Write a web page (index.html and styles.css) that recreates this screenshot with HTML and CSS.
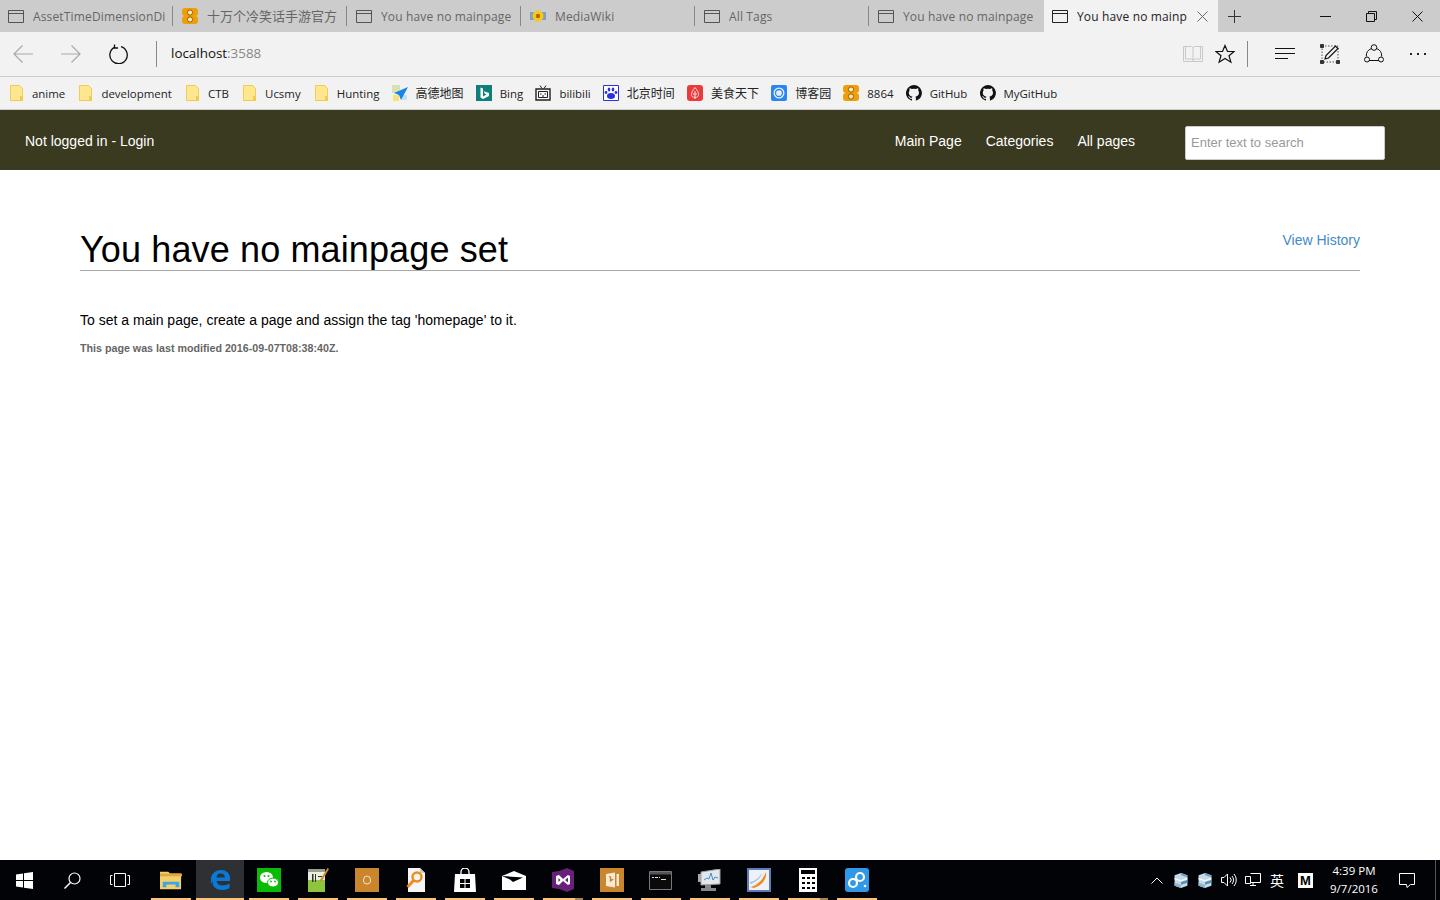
FILE: index.html
```html
<!DOCTYPE html>
<html lang="en">
<head>
    <meta charset="UTF-8">
    <title>You have no mainpage set</title>
    <link rel="stylesheet" href="styles.css">
</head>
<body>
<svg class="defs" width="0" height="0">
    <symbol id="pageIcon" viewBox="0 0 16 13">
        <path d="M.5.5h15v12H.5zM.5 3.5h15" fill="none" stroke="currentColor"/>
    </symbol>
    <symbol id="folder" viewBox="0 0 14 16">
        <path d="M.5.5h9l3 3v12H.5z" fill="#ffe78f" stroke="#f2cb52"/>
        <path d="M10 11h3v5h-3z" fill="#f2cb52"/>
    </symbol>
    <symbol id="eight" viewBox="0 0 16 16">
        <path d="M3 0h10q3 0 3 3v2q0 3-3 3q3 0 3 3v2q0 3-3 3H3q-3 0-3-3v-2q0-3 3-3q-3 0-3-3V3q0-3 3-3z" fill="#f09d09"/>
        <circle cx="8" cy="4.5" r="2.6" fill="#ffe9a8" stroke="#7a4b00" stroke-width=".8"/>
        <circle cx="8" cy="11.5" r="2.6" fill="#ffe9a8" stroke="#7a4b00" stroke-width=".8"/>
    </symbol>
    <symbol id="github" viewBox="0 0 16 16">
        <path d="M8 0a8 8 0 0 0-2.5 15.6c.4.1.5-.2.5-.4v-1.4c-2.2.5-2.7-1-2.7-1-.4-.9-.9-1.200-.9-1.200-.7-.5.1-.5.1-.5.8.1 1.200.8 1.200.8.7 1.200 1.900.9 2.300.7.1-.5.300-.9.500-1.100-1.800-.2-3.700-.9-3.700-4 0-.9.300-1.600.800-2.100-.1-.2-.4-1 .1-2.100 0 0 .7-.2 2.200.8a7.600 7.600 0 0 1 4 0c1.500-1 2.200-.8 2.200-.8.400 1.100.200 1.900.1 2.100.5.500.800 1.200.800 2.100 0 3.100-1.900 3.800-3.700 4 .3.300.6.700.6 1.500v2.200c0 .2.100.5.500.4A8 8 0 0 0 8 0z" fill="#111"/>
    </symbol>
    <symbol id="trayCube" viewBox="0 0 14 14">
        <path d="M1 2l6-2 6 2v10l-6 2-6-2z" fill="#c3dbe9"/>
        <path d="M1 4.500l6 2 6-2V6l-6 2-6-2z" fill="#f1f7fa"/>
        <path d="M7 0l6 2v2L7 2z" fill="#6f9fbd"/>
        <path d="M7 8.500l6-2V9l-6 2z" fill="#5a8fb2"/>
        <path d="M1 9l6 2v3l-6-2z" fill="#8fb6cf"/>
    </symbol>
</svg>

<div class="tabstrip">
    <div class="tab">
        <svg class="tabIcon"><use href="#pageIcon"/></svg>
        <span class="tabTitle">AssetTimeDimensionDi</span>
    </div>
    <div class="tab">
        <svg class="tabIcon tabIconFav"><use href="#eight"/></svg>
        <span class="tabTitle tabCjk">十万个冷笑话手游官方</span>
    </div>
    <div class="tab">
        <svg class="tabIcon"><use href="#pageIcon"/></svg>
        <span class="tabTitle">You have no mainpage</span>
    </div>
    <div class="tab">
        <svg class="tabIcon tabIconFav" viewBox="0 0 16 16">
            <path d="M.5 4h1v8h-1zM2.500 4h1v8h-1zM12.500 4h1v8h-1zM14.500 4h1v8h-1z" fill="#3f6fb5"/>
            <circle cx="8" cy="8" r="5.500" fill="#f4c91c"/>
            <circle cx="8" cy="8" r="2.200" fill="#b8640c"/>
        </svg>
        <span class="tabTitle">MediaWiki</span>
    </div>
    <div class="tab">
        <svg class="tabIcon"><use href="#pageIcon"/></svg>
        <span class="tabTitle">All Tags</span>
    </div>
    <div class="tab tabLast">
        <svg class="tabIcon"><use href="#pageIcon"/></svg>
        <span class="tabTitle">You have no mainpage</span>
    </div>
    <div class="tab tabActive">
        <svg class="tabIcon"><use href="#pageIcon"/></svg>
        <span class="tabTitle">You have no mainp</span>
        <svg class="tabClose" viewBox="0 0 11 11"><path d="M.5.500l10 10M10.500.500l-10 10" stroke="#666" fill="none"/></svg>
    </div>
    <svg class="newTab" viewBox="0 0 13 13"><path d="M6.500 0v13M0 6.500h13" stroke="#333" fill="none"/></svg>
    <div class="winControls">
        <div class="winBtn"><svg width="11" height="11" viewBox="0 0 11 11"><path d="M0 5.500h11" stroke="#111" fill="none"/></svg></div>
        <div class="winBtn"><svg width="11" height="11" viewBox="0 0 11 11"><path d="M.5 2.500h8v8h-8zM2.500 2.500v-2h8v8h-2" stroke="#111" fill="none"/></svg></div>
        <div class="winBtn"><svg width="11" height="11" viewBox="0 0 11 11"><path d="M.5.500l10 10M10.500.500l-10 10" stroke="#111" fill="none"/></svg></div>
    </div>
</div>

<div class="toolbar">
    <svg class="navArrow" viewBox="0 0 20 18"><path d="M20 9H1M9.500.500L1 9l8.500 8.500" fill="none" stroke="#aaa" stroke-width="1.200"/></svg>
    <svg class="navArrow navForward" viewBox="0 0 20 18"><path d="M0 9h19M10.500.500L19 9l-8.500 8.500" fill="none" stroke="#aaa" stroke-width="1.200"/></svg>
    <svg class="refresh" viewBox="0 0 20 20"><path d="M6 3.100a8.700 8.700 0 1 0 6-.4" fill="none" stroke="#111" stroke-width="1.300"/><path d="M5.500 .5v3.500h3.500" fill="none" stroke="#111" stroke-width="1.300"/></svg>
    <div class="vsep"></div>
    <div class="address">localhost<span class="port">:3588</span></div>
    <div class="toolIcons">
        <svg class="tool" viewBox="0 0 20 20"><path d="M.5 2.500h8l1.500 1 1.500-1h8v15h-19zM10 3.500v14M2.500 2.500v12.500h6l1.500 1 1.500-1h6V2.500" fill="none" stroke="#c8c8c8"/></svg>
        <svg class="tool toolStar" viewBox="0 0 20 20"><path d="M10 1.500l2.500 6h6.500l-5 4.200 1.900 6.500L10 14.500l-5.900 3.700L6 11.700 1 7.500h6.500z" fill="none" stroke="#111" stroke-width="1.200"/></svg>
        <div class="vsep vsepRight"></div>
        <svg class="tool toolHub" viewBox="0 0 20 20"><path d="M0 4.500h20M0 9.500h20M0 14.500h13" fill="none" stroke="#111"/></svg>
        <svg class="tool toolNote" viewBox="0 0 20 20"><path d="M2 2h16v16H2z" fill="none" stroke="#555" stroke-dasharray="1.500 1.500"/><path d="M.5.500h3v3h-3zM.5 16.500h3v3h-3zM16.500 16.500h3v3h-3z" fill="#333" stroke="#333"/><path d="M5 15l1-3.500L15.500 2l2.500 2.500L8.500 14z" fill="#f2f2f2" stroke="#111" stroke-width="1.200"/></svg>
        <svg class="tool toolShare" viewBox="0 0 20 20"><path d="M7.500 4.500A8 8 0 0 0 2.300 12.500M12.500 4.500a8 8 0 0 1 5.200 8M5 16.500h10" fill="none" stroke="#111"/><circle cx="10" cy="3.500" r="2.800" fill="none" stroke="#111"/><circle cx="3" cy="15.500" r="2.500" fill="none" stroke="#111"/><circle cx="17" cy="15.500" r="2.500" fill="none" stroke="#111"/></svg>
        <svg class="tool toolMore" viewBox="0 0 20 20"><path d="M2 9h2v2H2zM9 9h2v2H9zM16 9h2v2h-2z" fill="#222"/></svg>
    </div>
</div>

<div class="favbar">
    <div class="fav"><svg class="favFolder"><use href="#folder"/></svg>anime</div>
    <div class="fav"><svg class="favFolder"><use href="#folder"/></svg>development</div>
    <div class="fav"><svg class="favFolder"><use href="#folder"/></svg>CTB</div>
    <div class="fav"><svg class="favFolder"><use href="#folder"/></svg>Ucsmy</div>
    <div class="fav"><svg class="favFolder"><use href="#folder"/></svg>Hunting</div>
    <div class="fav favCjk">
        <svg class="favIcon" viewBox="0 0 16 16"><path d="M0 0h8v8H0z" fill="#d5e3b0"/><path d="M1 10h6v6H1z" fill="#f6e27a"/><path d="M10 10h5v5h-5z" fill="#c4dff5"/><path d="M16 2L2 8l5 2 2 5z" fill="#1586e8"/></svg>高德地图
    </div>
    <div class="fav">
        <svg class="favIcon" viewBox="0 0 16 16"><path d="M0 0h16v16H0z" fill="#0e8079"/><path d="M4.500 2.500l2.500 1v8l3.500-2-1.800-1-.9-2.300 5.200 1.800v3L7 14l-2.500-1.500z" fill="#fff"/></svg>Bing
    </div>
    <div class="fav">
        <svg class="favIcon" viewBox="0 0 16 16"><path d="M5 .5l2 3M11 .5l-2 3" stroke="#222" fill="none"/><path d="M1 4h14v11H1z" fill="#f7f7f7" stroke="#222" stroke-width="1.400"/><path d="M3.500 6.500h9v6h-9z" fill="none" stroke="#222"/><path d="M5 9h1.500M9.500 9H11M7 11h2" stroke="#222" fill="none"/></svg>bilibili
    </div>
    <div class="fav favCjk">
        <svg class="favIcon" viewBox="0 0 16 16"><path d="M.5.500h15v15H.5z" fill="#fff" stroke="#2932e1"/><ellipse cx="8" cy="11" rx="4" ry="3" fill="#2932e1"/><ellipse cx="6" cy="4.500" rx="1.300" ry="2" fill="#2932e1"/><ellipse cx="10" cy="4.500" rx="1.300" ry="2" fill="#2932e1"/><circle cx="3" cy="7.500" r="1.400" fill="#2932e1"/><circle cx="13" cy="7.500" r="1.400" fill="#2932e1"/></svg>北京时间
    </div>
    <div class="fav favCjk">
        <svg class="favIcon" viewBox="0 0 16 16"><path d="M3 0h10q3 0 3 3v10q0 3-3 3H3q-3 0-3-3V3q0-3 3-3z" fill="#ea3a3a"/><path d="M8 2.500c2.500 3 3.500 5 3.500 7 0 2-1.500 3-3.500 3s-3.500-1-3.500-3c0-2 1-4 3.500-7zM8 6v8M6 9h4" fill="none" stroke="#fbdcdc"/></svg>美食天下
    </div>
    <div class="fav favCjk">
        <svg class="favIcon" viewBox="0 0 16 16"><path d="M2 0h12q2 0 2 2v12q0 2-2 2H2q-2 0-2-2V2q0-2 2-2z" fill="#2a84f2"/><circle cx="8" cy="8" r="5.500" fill="#e6f1fe"/><circle cx="8" cy="8" r="3.500" fill="none" stroke="#2a84f2" stroke-width="1.300"/></svg>博客园
    </div>
    <div class="fav"><svg class="favIcon"><use href="#eight"/></svg>8864</div>
    <div class="fav"><svg class="favIcon"><use href="#github"/></svg>GitHub</div>
    <div class="fav"><svg class="favIcon"><use href="#github"/></svg>MyGitHub</div>
</div>

<nav class="topnav">
    <a class="navLink" href="#">Not logged in - Login</a>
    <div class="navRight">
        <a class="navLink" href="#">Main Page</a>
        <a class="navLink" href="#">Categories</a>
        <a class="navLink" href="#">All pages</a>
        <input class="search" type="text" placeholder="Enter text to search">
    </div>
</nav>

<main class="content">
    <div class="pageHead">
        <h1>You have no mainpage set</h1>
        <a class="history" href="#">View History</a>
    </div>
    <p class="bodyText">To set a main page, create a page and assign the tag 'homepage' to it.</p>
    <p class="modified">This page was last modified 2016-09-07T08:38:40Z.</p>
</main>

<div class="taskbar">
    <div class="taskSys">
        <svg width="17" height="17" viewBox="0 0 17 17"><path d="M0 2.500l7-1v6.500H0zM8 1.300L17 0v8H8zM0 9h7v6.500l-7-1zM8 9h9v8l-9-1.300z" fill="#fff"/></svg>
    </div>
    <div class="taskSys">
        <svg width="17" height="17" viewBox="0 0 17 17"><circle cx="10.500" cy="6.500" r="5.500" fill="none" stroke="#fff" stroke-width="1.200"/><path d="M6.500 10.500L.5 16.500" stroke="#fff" stroke-width="1.400"/></svg>
    </div>
    <div class="taskSys">
        <svg width="20" height="14" viewBox="0 0 20 14"><path d="M4.500.500h11v13h-11zM2.500 2.500h-2v9h2M17.500 2.500h2v9h-2" fill="none" stroke="#fff"/></svg>
    </div>
    <div class="taskApps">
        <div class="app appOpen">
            <svg width="22" height="20" viewBox="0 0 24 20"><path d="M0 1h9l2 2h12v17H0z" fill="#f5cf6c"/><path d="M0 3h24v3H0z" fill="#e0a93c"/><path d="M3 18v-6h18v6h-4v-3H7v3z" fill="#3ea6e8"/></svg>
        </div>
        <div class="app appOpen appActive">
            <svg width="20" height="20" viewBox="0 0 20 20"><path d="M1 8C2 3 6 0 11 0c5 0 9 3 9 8v3H6.500c.5 3 3 4.500 6 4.500 2.500 0 5-.7 7-2V18c-2 1.500-5 2-7.500 2C6 20 1.800 16.500 2.800 11c-.7 1-1.300 2-1.800 3.500-.2-2 0-4.500 0-6.500zm5.500-.5h8.500C15 5 13 3.500 10.500 3.500S7 5 6.500 7.500z" fill="#0a78d7"/></svg>
        </div>
        <div class="app appOpen">
            <svg width="24" height="24" viewBox="0 0 24 24"><path d="M0 0h24v24H0z" fill="#09bb07"/><ellipse cx="9.500" cy="9.500" rx="6.500" ry="5.500" fill="#fff"/><ellipse cx="16" cy="14.500" rx="5.500" ry="4.500" fill="#fff" stroke="#09bb07"/><circle cx="7.500" cy="8" r="1" fill="#09bb07"/><circle cx="11.500" cy="8" r="1" fill="#09bb07"/><circle cx="14" cy="13.500" r=".9" fill="#09bb07"/><circle cx="18" cy="13.500" r=".9" fill="#09bb07"/></svg>
        </div>
        <div class="app appOpen">
            <svg width="22" height="24" viewBox="0 0 22 24"><path d="M1 2h17v22H1z" fill="#e9efdf"/><path d="M1 12h17v12H1z" fill="#8fc43f"/><path d="M1 1h17v3H1z" fill="#9aa08e"/><path d="M5 6h1.500v8H5zM8 6h1v8H8zM11 8h4v1h-4z" fill="#333"/><path d="M20.500 0L22 1l-7 12-2 1 .2-2.500z" fill="#c9932c"/></svg>
        </div>
        <div class="app appOpen">
            <svg width="24" height="24" viewBox="0 0 24 24"><path d="M0 0h24v24H0z" fill="#c9862d"/><path d="M8.500 12a3.500 4 0 0 1 7 0v1a3.500 3 0 0 1-7 0z" fill="none" stroke="#f5e3c6"/></svg>
        </div>
        <div class="app appOpen">
            <svg width="20" height="24" viewBox="0 0 20 24"><path d="M2 0h12l5 5v19H2z" fill="#f6f6f6"/><path d="M14 0v5h5z" fill="#c9c9c9"/><circle cx="11" cy="9" r="4.500" fill="none" stroke="#f08a1d" stroke-width="2.400"/><path d="M7.500 12.500L1.500 19" stroke="#f08a1d" stroke-width="3"/></svg>
        </div>
        <div class="app appOpen">
            <svg width="22" height="24" viewBox="0 0 22 24"><path d="M7 6V4a4 4 0 0 1 8 0v2" fill="none" stroke="#fff" stroke-width="1.300"/><path d="M1 6h20l1 18H0z" fill="#fff"/><path d="M6 11h4.500v4H6zM11.500 11H16v4h-4.500zM6 16h4.500v4H6zM11.500 16H16v4h-4.500z" fill="#000"/></svg>
        </div>
        <div class="app appOpen">
            <svg width="24" height="19" viewBox="0 0 24 19"><path d="M0 5L12 0l12 5v14H0z" fill="#fff"/><path d="M0 5l21 1.500L11 11 8 8.500z" fill="#000"/></svg>
        </div>
        <div class="app appOpen appSplit">
            <svg width="22" height="24" viewBox="0 0 22 24"><path d="M0 4l7-1 8-3 7 3v18l-7 3-8-3-7-1z" fill="#68217a"/><path d="M4 8l3-1 4 4 5-4 2 1v8l-2 1-5-4-4 4-3-1zM6.500 10v4l2-2zM16 9.500L13 12l3 2.500z" fill="#fff" fill-rule="evenodd"/></svg>
        </div>
        <div class="app appOpen">
            <svg width="24" height="24" viewBox="0 0 24 24"><path d="M0 0h24v24H0z" fill="#c9862d"/><path d="M6 6l9-1.500v15L6 18z" fill="#f7ead4"/><path d="M16.500 6H19v12h-2.500z" fill="#f7ead4"/><path d="M9 8.500l1.500.5v4l2-1.500-1-.5" fill="none" stroke="#c9862d" stroke-width="1.300"/></svg>
        </div>
        <div class="app appOpen">
            <svg width="23" height="19" viewBox="0 0 23 19"><path d="M.5.500h22v18H.5z" fill="#0a0a0a" stroke="#777"/><path d="M1 1h21v2.500H1z" fill="#555"/><path d="M3 6h2v1H3zM6 6h3v1H6zM10 6h1v1h-1zM12 8h5v1h-5z" fill="#ddd"/></svg>
        </div>
        <div class="app appOpen">
            <svg width="24" height="22" viewBox="0 0 24 22"><path d="M7 12v7H3v3h15v-3h-5v-5z" fill="#888"/><path d="M3 3l19-3v15L3 16z" fill="#e4e7ea" stroke="#9aa0a6"/><path d="M6 11l3-2 2 1 2-6 2 7 2-3 3 1" fill="none" stroke="#3c8fd0"/><path d="M0 5h3v8H0z" fill="#aaa"/></svg>
        </div>
        <div class="app appOpen">
            <svg width="24" height="24" viewBox="0 0 24 24"><path d="M0 0h24v24H0z" fill="#5c7cba"/><path d="M2 2h20v20H2z" fill="#eef2f8"/><path d="M3 19C8 18 15 14 19 4c1 8-5 14-12 16z" fill="#f08a1d"/><path d="M3 14c5-1 9-4 12-9-1 5-6 9-12 11z" fill="#a6bfe0"/></svg>
        </div>
        <div class="app appOpen appSplit">
            <svg width="18" height="24" viewBox="0 0 18 24"><path d="M0 0h18v24H0z" fill="#fff"/><path d="M2 2h14v4H2zM3 9h3v2H3zM8 9h3v2H8zM13 9h3v2h-3zM3 14h3v2H3zM8 14h3v2H8zM13 14h3v2h-3zM3 19h3v2H3zM8 19h3v2H8zM13 19h3v2h-3z" fill="#000"/></svg>
        </div>
        <div class="app appOpen">
            <svg width="24" height="24" viewBox="0 0 24 24"><path d="M3 0h18q3 0 3 3v18q0 3-3 3H3q-3 0-3-3V3q0-3 3-3z" fill="#2f98e8"/><circle cx="8" cy="15" r="4" fill="none" stroke="#fff" stroke-width="2.200"/><circle cx="15" cy="9" r="4" fill="none" stroke="#fff" stroke-width="2.200"/><circle cx="20" cy="18" r="1.300" fill="#fff"/></svg>
        </div>
    </div>
    <div class="tray">
        <svg class="trayItem trayCaret" width="12" height="7" viewBox="0 0 12 7"><path d="M.5 6.500L6 1l5.500 5.500" fill="none" stroke="#fff"/></svg>
        <svg class="trayItem" width="16" height="15"><use href="#trayCube"/></svg>
        <svg class="trayItem" width="16" height="15"><use href="#trayCube"/></svg>
        <svg class="trayItem" width="16" height="14" viewBox="0 0 16 14"><path d="M.5 4.500h2.500L6.500 1v12L3 9.500H.5zM9 4.500a3.500 3.500 0 0 1 0 5M11 3a6 6 0 0 1 0 8M13 1a9 9 0 0 1 0 12" fill="none" stroke="#fff"/></svg>
        <svg class="trayItem" width="16" height="14" viewBox="0 0 16 14"><path d="M5.500.500h10v9h-10M.5 3.500h5v7h-5zM8 9.500v3M5 12.500h6" fill="none" stroke="#fff"/></svg>
        <span class="trayItem trayLang">英</span>
        <span class="trayItem trayIme">M</span>
        <div class="clock"><span>4:39 PM</span><span>9/7/2016</span></div>
        <svg class="notify" width="16" height="15" viewBox="0 0 16 15"><path d="M.5.500h15v11h-4l-3.500 3-.5-3h-7z" fill="none" stroke="#fff"/></svg>
        <div class="showDesktop"></div>
    </div>
</div>
</body>
</html>
```

FILE: styles.css
```css
html, body {
    margin: 0;
    height: 100%;
    overflow: hidden;
}

body {
    display: flex;
    flex-direction: column;
    height: 900px;
    background-color: #fff;
    font-family: "Liberation Sans", Arial, sans-serif;
    font-size: 14px;
    color: #000;
}

.defs {
    position: absolute;
}

/* barra de pestanas */
.tabstrip {
    display: flex;
    align-items: center;
    height: 32px;
    background-color: #ccc;
    font-family: "Open Sans", "Noto Sans CJK SC", sans-serif;
    font-size: 12px;
    letter-spacing: .15px;
}

.tab {
    box-sizing: border-box;
    display: flex;
    align-items: center;
    flex: none;
    width: 174px;
    height: 32px;
    padding-left: 8px;
    color: #666;
    position: relative;
    white-space: nowrap;
}

.tab::after {
    content: "";
    position: absolute;
    right: 1px;
    top: 6px;
    height: 20px;
    width: 1px;
    background-color: #888;
}

.tabLast::after,
.tabActive::after {
    display: none;
}

.tabActive {
    background-color: #f2f2f2;
    color: #222;
}

.tabIcon {
    width: 16px;
    height: 13px;
    margin-right: 9px;
    flex: none;
    color: #555;
}

.tabActive .tabIcon {
    color: #222;
}

.tabIconFav {
    height: 16px;
}

.tabTitle {
    overflow: hidden;
}

.tabCjk {
    margin-top: -2px;
    font-size: 13px;
    letter-spacing: 0;
}

.tabClose {
    width: 11px;
    height: 11px;
    margin-left: 10px;
    flex: none;
}

.newTab {
    width: 13px;
    height: 13px;
    margin-left: 10px;
}

.winControls {
    display: flex;
    margin-left: auto;
}

.winBtn {
    display: flex;
    align-items: center;
    justify-content: center;
    width: 46px;
    height: 32px;
}

/* barra de direcciones */
.toolbar {
    box-sizing: border-box;
    display: flex;
    align-items: center;
    height: 45px;
    padding-left: 13px;
    padding-bottom: 1px;
    background-color: #f2f2f2;
    border-bottom: 1px solid #ccc;
}

.navArrow {
    width: 20px;
    height: 18px;
}

.navForward {
    margin-left: 28px;
}

.refresh {
    width: 20px;
    height: 20px;
    margin-left: 28px;
}

.vsep {
    width: 1px;
    height: 26px;
    margin-left: 27px;
    background-color: #888;
}

.address {
    margin-left: 14px;
    margin-bottom: 2px;
    font-family: "Open Sans", sans-serif;
    font-size: 13.4px;
    color: #111;
}

.port {
    color: #888;
}

.toolIcons {
    display: flex;
    align-items: center;
    margin-left: auto;
    padding-right: 12px;
}

.tool {
    width: 20px;
    height: 20px;
    flex: none;
}

.toolStar {
    margin-left: 12px;
}

.vsepRight {
    margin-left: 12px;
}

.toolHub {
    margin-left: 27px;
}

.toolNote {
    margin-left: 25px;
}

.toolShare,
.toolMore {
    margin-left: 24px;
}

/* favoritos */
.favbar {
    box-sizing: border-box;
    display: flex;
    align-items: center;
    gap: 12.15px;
    height: 33px;
    padding-left: 8px;
    background-color: #f2f2f2;
    border-bottom: 1px solid #ccc;
    font-family: "Open Sans", "Noto Sans CJK SC", sans-serif;
    font-size: 11.45px;
    color: #222;
    white-space: nowrap;
}

.fav {
    display: flex;
    align-items: center;
}

.favCjk {
    font-size: 12px;
}

.favFolder {
    width: 14px;
    height: 16px;
    margin-right: 8px;
    margin-left: 2px;
}

.favIcon {
    width: 16px;
    height: 16px;
    margin-right: 8px;
}

/* menu de la pagina */
.topnav {
    box-sizing: border-box;
    display: flex;
    align-items: center;
    justify-content: space-between;
    height: 60px;
    flex: none;
    padding: 2px 55px 0 25px;
    background-color: #3a3a20;
}

.navLink {
    color: #fff;
    text-decoration: none;
}

.navRight {
    display: flex;
    align-items: center;
    gap: 24px;
}

.search {
    box-sizing: border-box;
    width: 200px;
    height: 34px;
    margin-top: 3px;
    margin-left: 26px;
    padding: 0 5px;
    border: 1px solid #ccc;
    border-radius: 2px;
    font-family: "Liberation Sans", Arial, sans-serif;
    font-size: 13px;
}

.search::placeholder {
    color: #999;
    opacity: 1;
}

/* contenido */
.content {
    flex: 1;
    padding: 60px 80px 0;
}

.pageHead {
    display: flex;
    justify-content: space-between;
    align-items: flex-start;
    border-bottom: 1px solid #aaa;
}

.pageHead h1 {
    margin: 0;
    font-size: 36px;
    font-weight: normal;
    line-height: 40px;
    letter-spacing: .13px;
}

.history {
    margin-top: 2px;
    color: #428bca;
    text-decoration: none;
}

.bodyText {
    margin: 41px 0 0;
    line-height: 16px;
    letter-spacing: .015px;
}

.modified {
    margin: 14px 0 0;
    font-size: 10.7px;
    font-weight: bold;
    line-height: 12px;
    color: #666;
}

/* barra de tareas */
.taskbar {
    display: flex;
    align-items: center;
    flex: none;
    height: 40px;
    background-color: #020306;
    color: #fff;
}

.taskSys {
    display: flex;
    align-items: center;
    justify-content: center;
    width: 48px;
    height: 40px;
    flex: none;
}

.taskApps {
    display: flex;
    margin-left: 2px;
}

.app {
    box-sizing: border-box;
    display: flex;
    align-items: center;
    justify-content: center;
    width: 49px;
    height: 40px;
    position: relative;
}

.appActive {
    background-color: #2f3033;
    border-left: 1px solid #020306;
}

.appOpen::after {
    content: "";
    position: absolute;
    left: 5px;
    right: 4px;
    bottom: 0;
    height: 2px;
    background-color: #fcc27c;
}

.appActive::after {
    left: 0;
    right: 0;
}

.appSplit::after {
    background: linear-gradient(to right, #fcc27c 32px, #a98658 32px);
}

.tray {
    display: flex;
    align-items: center;
    flex: 1;
    height: 40px;
    justify-content: flex-end;
    font-family: "Open Sans", "Noto Sans CJK SC", sans-serif;
    font-size: 11.5px;
}

.trayItem {
    margin-left: 8px;
    flex: none;
}

.trayCaret {
    margin-right: 2px;
}

.trayLang {
    margin-left: 9px;
    font-size: 14px;
    font-family: "Noto Sans CJK SC", sans-serif;
}

.trayIme {
    display: flex;
    align-items: center;
    justify-content: center;
    width: 15px;
    height: 15px;
    margin-left: 14px;
    background-color: #fff;
    color: #000;
    font-family: "Liberation Sans", Arial, sans-serif;
    font-size: 13px;
    font-weight: bold;
}

.clock {
    display: flex;
    flex-direction: column;
    align-items: center;
    width: 68px;
    margin-left: 7px;
    line-height: 18px;
}

.notify {
    margin-left: 11px;
    flex: none;
}

.showDesktop {
    width: 1px;
    height: 40px;
    margin-left: 20px;
    margin-right: 4px;
    background-color: #555;
}
```
